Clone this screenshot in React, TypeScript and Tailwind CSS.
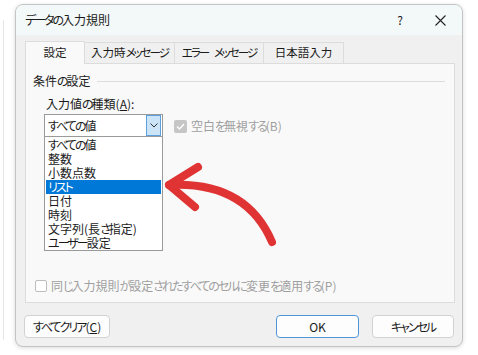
import React from "react";

// Meiryo UI draws kana narrow; tighten kana runs so widths match
function J({ t }: { t: string }) {
  const parts = t.split(/([\u3040-\u30ff]+)/);
  return (
    <>
      {parts.map((p, i) =>
        /[\u3040-\u30ff]/.test(p) ? (
          <span key={i} className="tracking-[-2px]">
            {p}
          </span>
        ) : (
          <React.Fragment key={i}>{p}</React.Fragment>
        )
      )}
    </>
  );
}

const items = [
  "すべての値",
  "整数",
  "小数点数",
  "リスト",
  "日付",
  "時刻",
  "文字列(長さ指定)",
  "ユーザー設定",
];

const tabs = [
  { label: "設定", w: "w-[60px]", active: true },
  { label: "入力時メッセージ", w: "w-[90px]", active: false },
  { label: "エラー\u2002メッセージ", w: "w-[89px]", active: false },
  { label: "日本語入力", w: "w-[80px]", active: false },
];

function Arrow() {
  return (
    <svg
      className="pointer-events-none absolute left-0 top-0"
      width="478"
      height="355"
      viewBox="0 0 478 355"
    >
      <path
        d="M272 242 Q246 181 169 185"
        fill="none"
        stroke="#e03434"
        strokeWidth="8"
        strokeLinecap="round"
      />
      <path
        d="M198 167 L169 185 L195 207"
        fill="none"
        stroke="#e03434"
        strokeWidth="8"
        strokeLinecap="round"
        strokeLinejoin="round"
      />
    </svg>
  );
}

export default function App() {
  return (
    <div className="relative h-[355px] w-[478px] overflow-hidden bg-white font-['Noto_Sans_CJK_JP','Noto_Sans',sans-serif] text-[12px] text-[#1b1b1b] [font-feature-settings:'palt']">
      {/* spreadsheet peeking out behind */}
      <div className="absolute left-[3px] top-[20px] h-[320px] w-[10px] border-l border-[#e6e6e6]" />

      <div className="absolute left-[15px] top-[4px] flex h-[343px] w-[448px] flex-col overflow-hidden rounded-[8px] border border-[#c4c4c4] bg-[#f0f0f0] shadow-[0_1px_4px_rgba(0,0,0,0.15)]">
        {/* title bar */}
        <div className="flex h-[30px] shrink-0 items-center bg-[#f3f8f8] pl-[9px] pr-[16px]">
          <span className="text-[12px]">
            <J t="データの入力規則" />
          </span>
          <span className="ml-auto text-[12px]">?</span>
          <svg className="ml-[32px]" width="11" height="11" viewBox="0 0 11 11">
            <path d="M0.5 0.5 L10.5 10.5 M10.5 0.5 L0.5 10.5" stroke="#222" strokeWidth="1.1" />
          </svg>
        </div>

        {/* tabs */}
        <div className="ml-[9px] mt-[6px] flex h-[22px] items-end text-[11.5px]">
          {tabs.map((t) =>
            t.active ? (
              <div
                key={t.label}
                className={`${t.w} relative z-10 -mb-px flex h-[23px] items-center justify-center whitespace-nowrap border border-b-0 border-[#dcdcdc] bg-[#f9f9f9]`}
              >
                <J t={t.label} />
              </div>
            ) : (
              <div
                key={t.label}
                className={`${t.w} flex h-[21px] items-center justify-center whitespace-nowrap border-r border-t border-[#dcdcdc]`}
              >
                <J t={t.label} />
              </div>
            )
          )}
        </div>

        {/* panel */}
        <div className="ml-[9px] flex h-[240px] w-[430px] flex-col border border-[#dcdcdc] bg-[#f9f9f9] pl-[7px] pr-[9px]">
          <div className="mt-[10px] flex h-[14px] items-center">
            <span className="leading-[14px]">
              <J t="条件の設定" />
            </span>
            <div className="ml-[6px] h-px flex-1 bg-[#dcdcdc]" />
          </div>

          <div className="ml-[13px] mt-[9px] h-[14px] leading-[14px]">
            <J t="入力値の種類" />(<span className="underline">A</span>):
          </div>

          <div className="ml-[11px] mt-[3px] flex items-start">
            <div className="flex w-[119px] flex-col">
              <div className="flex h-[23px] items-center border border-[#9a9a9a] bg-white">
                <span className="flex-1 pl-[3px] leading-[14px]">
                  <J t="すべての値" />
                </span>
                <div className="mr-px flex h-[21px] w-[15px] items-center justify-center border border-[#5e9fdd] bg-[#cce4f7]">
                  <svg width="8" height="5" viewBox="0 0 8 5">
                    <path d="M0.5 0.5 L4 4 L7.5 0.5" fill="none" stroke="#333" strokeWidth="1" />
                  </svg>
                </div>
              </div>
              <div className="flex h-[114px] flex-col border border-t-0 border-[#9a9a9a] bg-white pt-px">
                {items.map((it) => (
                  <div
                    key={it}
                    className={
                      it === "リスト"
                        ? "mx-px h-[14px] whitespace-nowrap bg-[#0078d7] pl-[2px] leading-[14px] text-white"
                        : "mx-px h-[14px] whitespace-nowrap pl-[2px] leading-[14px]"
                    }
                  >
                    <J t={it} />
                  </div>
                ))}
              </div>
            </div>

            <div className="ml-[11px] mt-[3px] flex items-center text-[#9f9f9f]">
              <div className="flex h-[13px] w-[13px] items-center justify-center rounded-[2px] bg-[#c6c6c6]">
                <svg width="9" height="7" viewBox="0 0 9 7">
                  <path d="M1 3.5 L3.5 6 L8 1" fill="none" stroke="white" strokeWidth="1.3" />
                </svg>
              </div>
              <span className="ml-[4px]">
                <J t="空白を無視する(B)" />
              </span>
            </div>
          </div>

          <div className="ml-[2px] mt-[26px] flex items-center text-[#9f9f9f]">
            <div className="h-[12px] w-[12px] rounded-[2px] border border-[#bdbdbd] bg-white" />
            <span className="ml-[4px]">
              <J t="同じ入力規則が設定されたすべてのセルに変更を適用する(P)" />
            </span>
          </div>
        </div>

        {/* buttons */}
        <div className="ml-[8px] mr-[8px] mt-[12px] flex">
          <button className="flex h-[23px] w-[86px] items-center justify-center rounded-[4px] border border-[#d2d2d2] bg-[#fdfdfd]">
            <J t="すべてクリア" />(<span className="underline">C</span>)
          </button>
          <button className="ml-auto flex h-[23px] w-[83px] items-center justify-center rounded-[4px] border border-[#4f95d8] bg-[#fdfdfd]">
            OK
          </button>
          <button className="ml-[13px] flex h-[23px] w-[82px] items-center justify-center rounded-[4px] border border-[#d2d2d2] bg-[#fdfdfd]">
            <J t="キャンセル" />
          </button>
        </div>
      </div>

      <Arrow />
    </div>
  );
}
